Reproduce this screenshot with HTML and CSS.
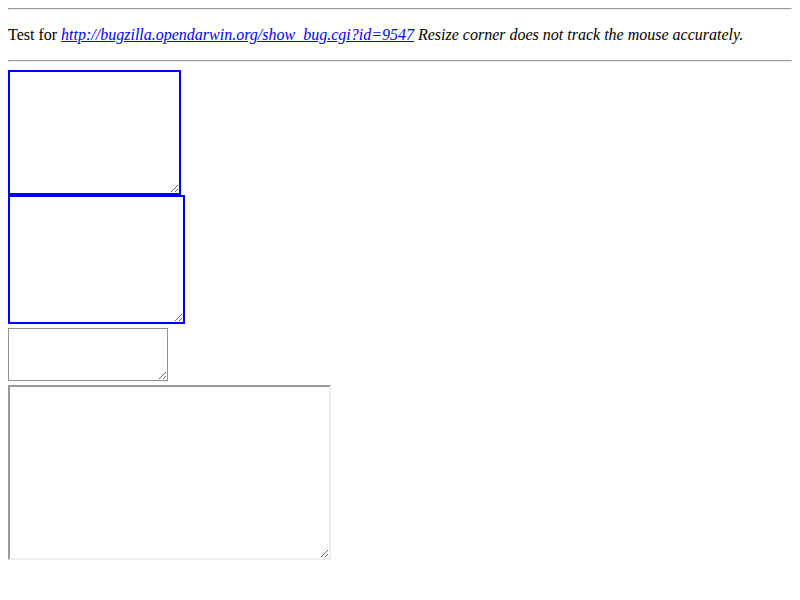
FILE: index.html
```html
<!DOCTYPE html>
<html>
<head>
<meta charset="utf-8">
<link rel="stylesheet" href="styles.css">
</head>
<body>
<hr class="rule rule-top">
<p class="intro">Test for <a class="bug-link" href="#"><i>http://bugzilla.opendarwin.org/show_bug.cgi?id=9547</i></a> <i>Resize corner does not track the mouse accurately.</i></p>
<hr class="rule">
<textarea class="box box-one"></textarea>
<textarea class="box box-two"></textarea>
<textarea class="box box-three"></textarea>
<textarea class="box box-four"></textarea>
</body>
</html>
```
FILE: styles.css
```css
html, body {
  background: #ffffff;
}
body {
  margin: 8px;
  font-family: "Liberation Serif", "Times New Roman", serif;
  font-size: 16px;
  color: #000000;
}
.rule {
  margin: 8px 0;
  height: 0;
  border-width: 1px;
  border-style: solid;
  border-color: #9a9a9a #eeeeee #eeeeee #9a9a9a;
}
.rule-top {
  margin-top: 0;
}
.intro {
  margin: 16px 0;
  line-height: 18px;
}
.bug-link {
  color: #0000ff;
}
.box {
  display: block;
  box-sizing: border-box;
  margin: 0;
  padding: 2px;
  background: #ffffff;
  font-family: "Liberation Mono", monospace;
  font-size: 13px;
}
.box-one {
  width: 173px;
  height: 125px;
  border: 2px solid #0000ff;
}
.box-two {
  width: 177px;
  height: 129px;
  border: 2px solid #0000ff;
}
.box-three {
  margin-top: 4px;
  width: 160px;
  height: 53px;
  border: 1px solid #8f8f8f;
}
.box-four {
  margin-top: 4px;
  width: 323px;
  height: 175px;
  border: 2px solid;
  border-color: #999999 #eeeeee #eeeeee #999999;
}
```
